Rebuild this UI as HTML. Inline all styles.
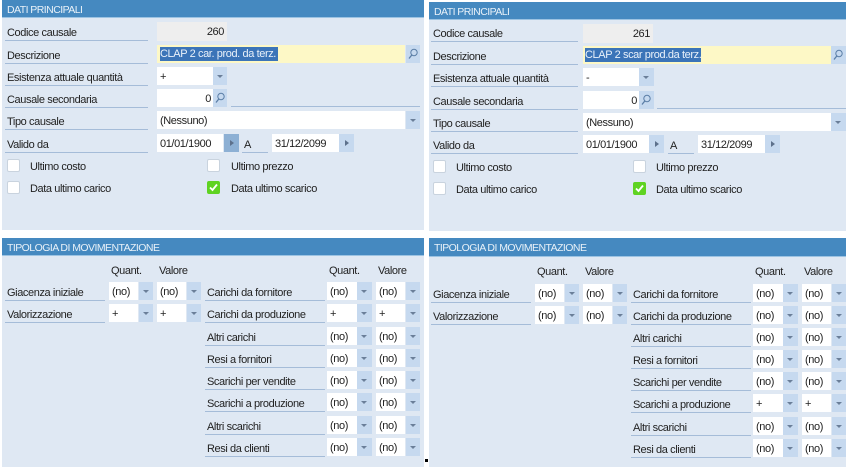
<!DOCTYPE html>
<html><head><meta charset="utf-8"><style>
html,body{margin:0;padding:0;background:#fff;width:846px;height:467px;overflow:hidden}
#w{position:absolute;left:0;top:0;width:846px;height:467px;overflow:hidden;font:11px/18px "Liberation Sans",sans-serif;color:#222;letter-spacing:-.4px;filter:blur(.35px)}
.p{position:absolute;top:0;width:422px;height:467px}
.p div{position:absolute;box-sizing:border-box}
.h{left:0;width:422px;height:18px;background:#4589c0;color:#e8f1f8;padding-left:5px;line-height:20px;border-bottom:1px solid #9cc3e2;font-size:10.5px;letter-spacing:-.55px}
.g{left:0;width:422px;background:#dfe8f3}
.l{height:19px;border-bottom:1px solid #a5bcd8;padding-left:2px;white-space:nowrap;line-height:22px}
.f{height:18px;background:#fff;padding-left:3px;white-space:nowrap;line-height:20px}
.b{height:18px;background:#c6d9ef}
.b::after{content:"";position:absolute;left:3.5px;top:7.5px;border:3.5px solid transparent;border-top:3.5px solid #6b7f99;border-bottom:0}
.r::after{left:6px;top:5.5px;border:3.5px solid transparent;border-left:4px solid #5d718c;border-right:0}
.s::after{display:none}
.b svg{position:absolute;left:1px;top:2px}
.c{width:13px;height:13px;background:#fff;border:1px solid #c9d3de;border-radius:2px}
.t{white-space:nowrap;margin-top:1px}
.p1{left:107px;width:29px}.b1{left:137px;width:14px}
.p2{left:155px;width:29px}.b2{left:185px;width:14px}
.p3{left:325px;width:30px}.b3{left:355px;width:15px}
.p4{left:374px;width:29px}.b4{left:404px;width:14px}
.m{left:203px;width:120px}
</style></head><body><div id="w">

<div class="p" style="left:2px">
<div class="h" style="top:0">DATI PRINCIPALI</div>
<div class="g" style="top:18px;height:212px"></div>
<div class="l" style="left:3px;top:22px;width:143px">Codice causale</div>
<div class="f" style="left:155px;top:22px;width:70px;height:19px;background:#eee;text-align:right;padding-right:3px">260</div>
<div class="l" style="left:3px;top:45px;width:143px">Descrizione</div>
<div class="f" style="left:155px;top:45px;width:248px;background:#fdf8c6"></div>
<div class="t" style="left:158px;top:47px;width:118px;height:14px;line-height:14px;background:#3b74b8;color:#e9f1fa;margin:0">CLAP 2 car. prod. da terz.</div>
<div class="b s" style="left:404px;top:45px;width:14px"><svg width="12" height="14" viewBox="0 0 12 14"><circle cx="7" cy="5.5" r="3.2" fill="none" stroke="#5b7ea6" stroke-width="1"/><path d="M4.8 8L2 11.5" stroke="#5b7ea6" stroke-width="1.3"/></svg></div>
<div class="l" style="left:3px;top:67px;width:143px">Esistenza attuale quantità</div>
<div class="f" style="left:155px;top:67px;width:57px">+</div><div class="b" style="left:211px;top:67px;width:14px"></div>
<div class="l" style="left:3px;top:89px;width:143px">Causale secondaria</div>
<div class="f" style="left:155px;top:89px;width:57px;text-align:right;padding-right:3px">0</div>
<div class="b s" style="left:211px;top:89px;width:14px"><svg width="12" height="14" viewBox="0 0 12 14"><circle cx="7" cy="5.5" r="3.2" fill="none" stroke="#5b7ea6" stroke-width="1"/><path d="M4.8 8L2 11.5" stroke="#5b7ea6" stroke-width="1.3"/></svg></div>
<div class="l" style="left:229px;top:88px;width:189px;padding:0"></div>
<div class="l" style="left:3px;top:111px;width:143px">Tipo causale</div>
<div class="f" style="left:155px;top:111px;width:248px">(Nessuno)</div><div class="b" style="left:404px;top:111px;width:14px"></div>
<div class="l" style="left:3px;top:134px;width:143px">Valido da</div>
<div class="f" style="left:155px;top:134px;width:66px">01/01/1900</div><div class="b r" style="left:222px;top:134px;width:15px;background:#8db0d4"></div>
<div class="l" style="left:240px;top:134px;width:26px">A</div>
<div class="f" style="left:270px;top:134px;width:67px">31/12/2099</div><div class="b r" style="left:337px;top:134px;width:15px"></div>
<div class="c" style="left:5px;top:159px"></div><div class="t" style="left:28px;top:157px">Ultimo costo</div>
<div class="c" style="left:205px;top:159px"></div><div class="t" style="left:229px;top:157px">Ultimo prezzo</div>
<div class="c" style="left:5px;top:181px"></div><div class="t" style="left:28px;top:179px">Data ultimo carico</div>
<div class="c" style="left:205px;top:181px;background:#5fd322;border-color:#5fd322"><svg width="11" height="11" viewBox="0 0 11 11" style="display:block"><path d="M2 5.5L4.5 8L9 2.5" fill="none" stroke="#fff" stroke-width="1.8"/></svg></div><div class="t" style="left:229px;top:179px">Data ultimo scarico</div>

<div class="h" style="top:238px">TIPOLOGIA DI MOVIMENTAZIONE</div>
<div class="g" style="top:256px;height:211px"></div>
<div class="t" style="left:109px;top:261px">Quant.</div><div class="t" style="left:157px;top:261px">Valore</div>
<div class="t" style="left:327px;top:261px">Quant.</div><div class="t" style="left:376px;top:261px">Valore</div>
<div class="l" style="left:3px;top:282px;width:100px">Giacenza iniziale</div>
<div class="f p1" style="top:282px">(no)</div><div class="b b1" style="top:282px"></div><div class="f p2" style="top:282px">(no)</div><div class="b b2" style="top:282px"></div>
<div class="l" style="left:3px;top:304px;width:100px">Valorizzazione</div>
<div class="f p1" style="top:304px">+</div><div class="b b1" style="top:304px"></div><div class="f p2" style="top:304px">+</div><div class="b b2" style="top:304px"></div>
<div class="l m" style="top:282px">Carichi da fornitore</div><div class="f p3" style="top:282px">(no)</div><div class="b b3" style="top:282px"></div><div class="f p4" style="top:282px">(no)</div><div class="b b4" style="top:282px"></div>
<div class="l m" style="top:304px">Carichi da produzione</div><div class="f p3" style="top:304px">+</div><div class="b b3" style="top:304px"></div><div class="f p4" style="top:304px">+</div><div class="b b4" style="top:304px"></div>
<div class="l m" style="top:327px">Altri carichi</div><div class="f p3" style="top:327px">(no)</div><div class="b b3" style="top:327px"></div><div class="f p4" style="top:327px">(no)</div><div class="b b4" style="top:327px"></div>
<div class="l m" style="top:349px">Resi a fornitori</div><div class="f p3" style="top:349px">(no)</div><div class="b b3" style="top:349px"></div><div class="f p4" style="top:349px">(no)</div><div class="b b4" style="top:349px"></div>
<div class="l m" style="top:371px">Scarichi per vendite</div><div class="f p3" style="top:371px">(no)</div><div class="b b3" style="top:371px"></div><div class="f p4" style="top:371px">(no)</div><div class="b b4" style="top:371px"></div>
<div class="l m" style="top:393px">Scarichi a produzione</div><div class="f p3" style="top:393px">(no)</div><div class="b b3" style="top:393px"></div><div class="f p4" style="top:393px">(no)</div><div class="b b4" style="top:393px"></div>
<div class="l m" style="top:416px">Altri scarichi</div><div class="f p3" style="top:416px">(no)</div><div class="b b3" style="top:416px"></div><div class="f p4" style="top:416px">(no)</div><div class="b b4" style="top:416px"></div>
<div class="l m" style="top:438px">Resi da clienti</div><div class="f p3" style="top:438px">(no)</div><div class="b b3" style="top:438px"></div><div class="f p4" style="top:438px">(no)</div><div class="b b4" style="top:438px"></div>
</div>

<div class="p" style="left:428px;top:1px">
<div class="h" style="top:1px;left:1px">DATI PRINCIPALI</div>
<div class="g" style="top:19px;left:1px;height:211px"></div>
<div class="l" style="left:3px;top:22px;width:147px">Codice causale</div>
<div class="f" style="left:155px;top:23px;width:70px;height:19px;background:#eee;text-align:right;padding-right:3px">261</div>
<div class="l" style="left:3px;top:45px;width:147px">Descrizione</div>
<div class="f" style="left:155px;top:45px;width:248px;background:#fdf8c6"></div>
<div class="t" style="left:157px;top:47px;width:116px;height:14px;line-height:14px;background:#3b74b8;color:#e9f1fa;margin:0">CLAP 2 scar prod.da terz.</div>
<div class="b s" style="left:403px;top:45px;width:15px"><svg width="12" height="14" viewBox="0 0 12 14"><circle cx="7" cy="5.5" r="3.2" fill="none" stroke="#5b7ea6" stroke-width="1"/><path d="M4.8 8L2 11.5" stroke="#5b7ea6" stroke-width="1.3"/></svg></div>
<div class="l" style="left:3px;top:67px;width:147px">Esistenza attuale quantità</div>
<div class="f" style="left:155px;top:67px;width:57px">-</div><div class="b" style="left:211px;top:67px;width:15px"></div>
<div class="l" style="left:3px;top:90px;width:147px">Causale secondaria</div>
<div class="f" style="left:155px;top:90px;width:57px;text-align:right;padding-right:3px">0</div>
<div class="b s" style="left:211px;top:90px;width:15px"><svg width="12" height="14" viewBox="0 0 12 14"><circle cx="7" cy="5.5" r="3.2" fill="none" stroke="#5b7ea6" stroke-width="1"/><path d="M4.8 8L2 11.5" stroke="#5b7ea6" stroke-width="1.3"/></svg></div>
<div class="l" style="left:229px;top:89px;width:189px;padding:0"></div>
<div class="l" style="left:3px;top:112px;width:147px">Tipo causale</div>
<div class="f" style="left:155px;top:112px;width:248px">(Nessuno)</div><div class="b" style="left:403px;top:112px;width:15px"></div>
<div class="l" style="left:3px;top:134px;width:147px">Valido da</div>
<div class="f" style="left:155px;top:134px;width:66px">01/01/1900</div><div class="b r" style="left:221px;top:134px;width:15px"></div>
<div class="l" style="left:240px;top:134px;width:26px">A</div>
<div class="f" style="left:270px;top:134px;width:67px">31/12/2099</div><div class="b r" style="left:337px;top:134px;width:15px"></div>
<div class="c" style="left:5px;top:159px"></div><div class="t" style="left:28px;top:157px">Ultimo costo</div>
<div class="c" style="left:205px;top:159px"></div><div class="t" style="left:228px;top:157px">Ultimo prezzo</div>
<div class="c" style="left:5px;top:181px"></div><div class="t" style="left:28px;top:179px">Data ultimo carico</div>
<div class="c" style="left:205px;top:181px;background:#5fd322;border-color:#5fd322"><svg width="11" height="11" viewBox="0 0 11 11" style="display:block"><path d="M2 5.5L4.5 8L9 2.5" fill="none" stroke="#fff" stroke-width="1.8"/></svg></div><div class="t" style="left:228px;top:179px">Data ultimo scarico</div>

<div class="h" style="top:237px;left:1px;height:19px">TIPOLOGIA DI MOVIMENTAZIONE</div>
<div class="g" style="top:256px;left:1px;height:211px"></div>
<div class="t" style="left:109px;top:261px">Quant.</div><div class="t" style="left:157px;top:261px">Valore</div>
<div class="t" style="left:327px;top:261px">Quant.</div><div class="t" style="left:376px;top:261px">Valore</div>
<div class="l" style="left:3px;top:283px;width:100px">Giacenza iniziale</div>
<div class="f p1" style="top:283px">(no)</div><div class="b b1" style="top:283px"></div><div class="f p2" style="top:283px">(no)</div><div class="b b2" style="top:283px"></div>
<div class="l" style="left:3px;top:305px;width:100px">Valorizzazione</div>
<div class="f p1" style="top:305px">(no)</div><div class="b b1" style="top:305px"></div><div class="f p2" style="top:305px">(no)</div><div class="b b2" style="top:305px"></div>
<div class="l m" style="top:283px">Carichi da fornitore</div><div class="f p3" style="top:283px">(no)</div><div class="b b3" style="top:283px"></div><div class="f p4" style="top:283px">(no)</div><div class="b b4" style="top:283px"></div>
<div class="l m" style="top:305px">Carichi da produzione</div><div class="f p3" style="top:305px">(no)</div><div class="b b3" style="top:305px"></div><div class="f p4" style="top:305px">(no)</div><div class="b b4" style="top:305px"></div>
<div class="l m" style="top:327px">Altri carichi</div><div class="f p3" style="top:327px">(no)</div><div class="b b3" style="top:327px"></div><div class="f p4" style="top:327px">(no)</div><div class="b b4" style="top:327px"></div>
<div class="l m" style="top:349px">Resi a fornitori</div><div class="f p3" style="top:349px">(no)</div><div class="b b3" style="top:349px"></div><div class="f p4" style="top:349px">(no)</div><div class="b b4" style="top:349px"></div>
<div class="l m" style="top:371px">Scarichi per vendite</div><div class="f p3" style="top:371px">(no)</div><div class="b b3" style="top:371px"></div><div class="f p4" style="top:371px">(no)</div><div class="b b4" style="top:371px"></div>
<div class="l m" style="top:393px">Scarichi a produzione</div><div class="f p3" style="top:393px">+</div><div class="b b3" style="top:393px"></div><div class="f p4" style="top:393px">+</div><div class="b b4" style="top:393px"></div>
<div class="l m" style="top:416px">Altri scarichi</div><div class="f p3" style="top:416px">(no)</div><div class="b b3" style="top:416px"></div><div class="f p4" style="top:416px">(no)</div><div class="b b4" style="top:416px"></div>
<div class="l m" style="top:438px">Resi da clienti</div><div class="f p3" style="top:438px">(no)</div><div class="b b3" style="top:438px"></div><div class="f p4" style="top:438px">(no)</div><div class="b b4" style="top:438px"></div>
</div>

<div style="position:absolute;left:425px;top:459px;width:3px;height:3px;background:#000"></div>
</div></body></html>
